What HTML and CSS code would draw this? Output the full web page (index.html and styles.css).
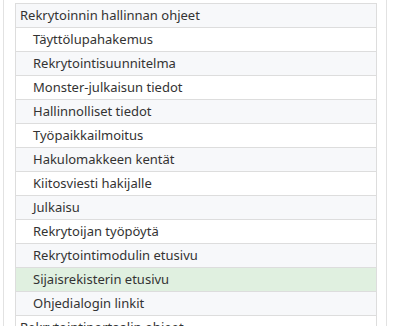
FILE: index.html
```html
<!DOCTYPE html>
<html>
<head>
  <title>Ohjeet</title>
  <link rel="stylesheet" href="styles.css">
</head>
<body>
  <div class="panel">
    <ul class="help-list">
      <li class="group">Rekrytoinnin hallinnan ohjeet</li>
      <li class="item">Täyttölupahakemus</li>
      <li class="item">Rekrytointisuunnitelma</li>
      <li class="item">Monster-julkaisun tiedot</li>
      <li class="item">Hallinnolliset tiedot</li>
      <li class="item">Työpaikkailmoitus</li>
      <li class="item">Hakulomakkeen kentät</li>
      <li class="item">Kiitosviesti hakijalle</li>
      <li class="item">Julkaisu</li>
      <li class="item">Rekrytoijan työpöytä</li>
      <li class="item">Rekrytointimodulin etusivu</li>
      <li class="item active">Sijaisrekisterin etusivu</li>
      <li class="item">Ohjedialogin linkit</li>
      <li class="group">Rekrytointiportaalin ohjeet</li>
    </ul>
  </div>
</body>
</html>
```

FILE: styles.css
```css
body {
  margin: 0;
  font-family: "Noto Sans", sans-serif;
  font-size: 13px;
  color: #333;
  background-color: #fff;
  overflow: hidden;
}

.panel {
  margin-left: 3px;
  width: 384px;
  height: 326px;
  padding-top: 3px;
  box-sizing: border-box;
  border-left: 1px solid #e2e2e2;
  border-right: 1px solid #e2e2e2;
}

.help-list {
  list-style: none;
  margin: 0 9px 0 11px;
  padding: 0;
  border-top: 1px solid #ddd;
}

.help-list li {
  height: 23px;
  line-height: 23px;
  border-left: 1px solid #ddd;
  border-right: 1px solid #ddd;
  border-bottom: 1px solid #ddd;
  white-space: nowrap;
}

.help-list li:nth-child(odd) {
  background-color: #f7f8fa;
}

.group {
  padding-left: 4px;
}

.item {
  padding-left: 17px;
}

.help-list li.active {
  background-color: #e0f0e0;
}
```
